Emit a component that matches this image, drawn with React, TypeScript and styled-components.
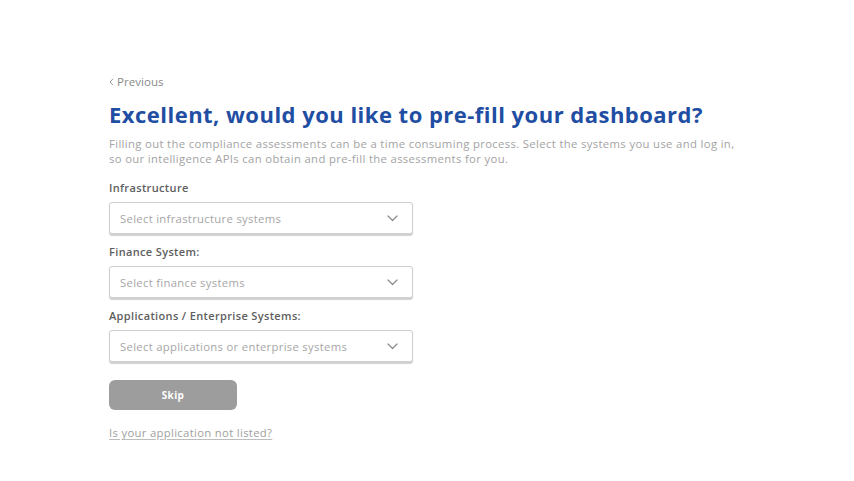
import React from "react";
import styled, { createGlobalStyle } from "styled-components";

const GlobalStyle = createGlobalStyle`
  html, body { margin: 0; padding: 0; background: #ffffff; }
  body { font-family: "Open Sans", "Noto Sans", sans-serif; }
  * { box-sizing: border-box; }
`;

const Page = styled.div`
  width: 854px;
  height: 481px;
  padding: 74px 0 0 109px;
  display: flex;
  flex-direction: column;
  align-items: flex-start;
`;

const Back = styled.a`
  display: flex;
  align-items: center;
  gap: 3px;
  font-size: 11.5px;
  line-height: 16px;
  color: #8a8a8a;
  text-decoration: none;
  letter-spacing: 0.05px;
  cursor: pointer;
`;

const Title = styled.h1`
  margin: 10px 0 0;
  font-size: 22px;
  line-height: 28px;
  font-weight: 700;
  color: #1f4ea3;
  letter-spacing: 0.48px;
`;

const Intro = styled.p`
  margin: 9px 0 0;
  width: 632px;
  font-size: 11.3px;
  line-height: 14.5px;
  color: #a3a3a3;
  letter-spacing: 0.35px;
`;

const Field = styled.div<{ $first?: boolean }>`
  display: flex;
  flex-direction: column;
  margin-top: ${(p) => (p.$first ? "15px" : "11px")};
`;

const Label = styled.label`
  font-size: 11px;
  line-height: 14px;
  font-weight: 600;
  color: #5e5e5e;
  letter-spacing: 0.35px;
  margin-bottom: 7px;
`;

const SelectBox = styled.div`
  width: 304px;
  height: 32px;
  border: 1px solid #cfcfcf;
  border-radius: 3px;
  box-shadow: 0 1.5px 1px rgba(0, 0, 0, 0.18);
  display: flex;
  align-items: center;
  justify-content: space-between;
  padding: 0 14px 0 10px;
  background: #fff;
`;

const Placeholder = styled.span`
  font-size: 11.3px;
  color: #a6a6a6;
  letter-spacing: 0.3px;
`;

const SkipButton = styled.button`
  margin-top: 18px;
  width: 128px;
  height: 30px;
  border: none;
  border-radius: 6px;
  background: #9d9d9d;
  color: #ffffff;
  font-family: inherit;
  font-size: 10px;
  font-weight: 700;
  letter-spacing: 0.4px;
`;

const Link = styled.a`
  margin-top: 16px;
  font-size: 11.3px;
  line-height: 14px;
  color: #a0a0a0;
  text-decoration: underline;
  text-decoration-color: #bdbdbd;
  text-underline-offset: 2px;
  letter-spacing: 0.32px;
`;

const Chevron = () => (
  <svg width="11" height="7" viewBox="0 0 11 7" fill="none">
    <path d="M1 1l4.5 4.5L10 1" stroke="#8c8c8c" strokeWidth="1.2" strokeLinecap="round" strokeLinejoin="round" />
  </svg>
);

const fields = [
  { label: "Infrastructure", placeholder: "Select infrastructure systems" },
  { label: "Finance System:", placeholder: "Select finance systems" },
  { label: "Applications / Enterprise Systems:", placeholder: "Select applications or enterprise systems" },
];

export default function App() {
  return (
    <>
      <GlobalStyle />
      <Page>
        <Back>
          <svg width="5" height="8" viewBox="0 0 5 8" fill="none">
            <path d="M4 0.8L1 4l3 3.2" stroke="#8a8a8a" strokeWidth="0.9" />
          </svg>
          Previous
        </Back>
        <Title>Excellent, would you like to pre-fill your dashboard?</Title>
        <Intro>
          Filling out the compliance assessments can be a time consuming process. Select the systems you use and log in,
          so our intelligence APIs can obtain and pre-fill the assessments for you.
        </Intro>
        {fields.map((f, i) => (
          <Field key={f.label} $first={i === 0}>
            <Label>{f.label}</Label>
            <SelectBox>
              <Placeholder>{f.placeholder}</Placeholder>
              <Chevron />
            </SelectBox>
          </Field>
        ))}
        <SkipButton>Skip</SkipButton>
        <Link>Is your application not listed?</Link>
      </Page>
    </>
  );
}
